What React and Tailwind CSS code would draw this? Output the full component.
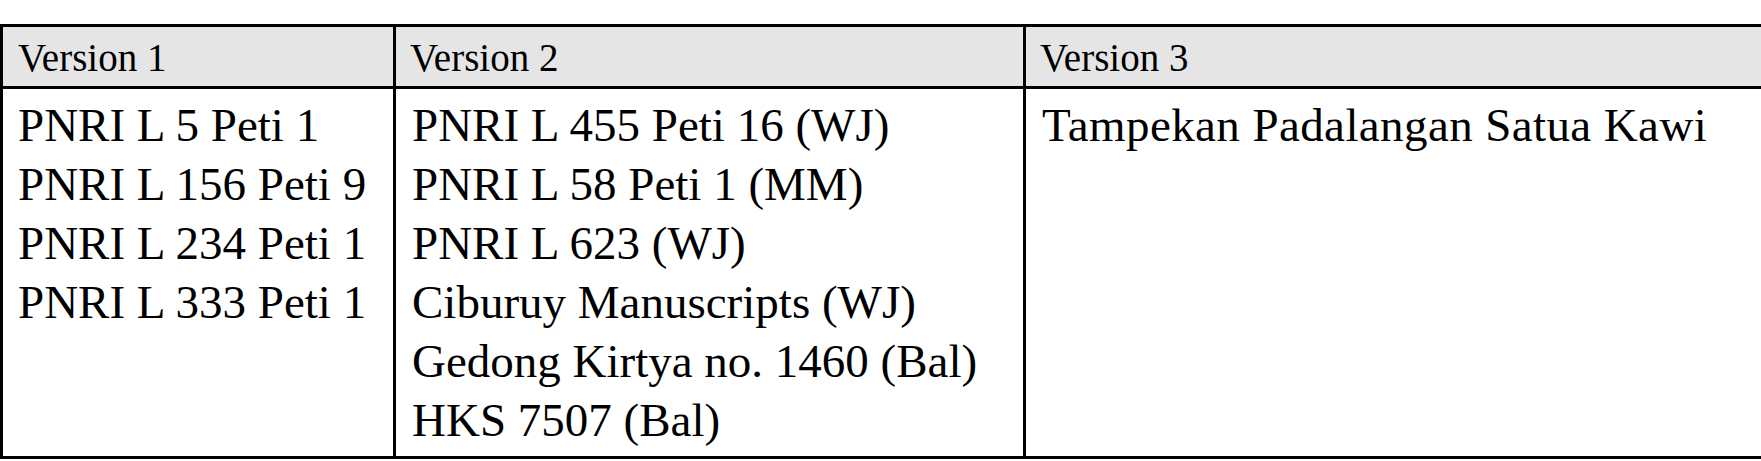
import React from "react";

const versions = [
  {
    title: "Version 1",
    items: ["PNRI L 5 Peti 1", "PNRI L 156 Peti 9", "PNRI L 234 Peti 1", "PNRI L 333 Peti 1"],
  },
  {
    title: "Version 2",
    items: [
      "PNRI L 455 Peti 16 (WJ)",
      "PNRI L 58 Peti 1 (MM)",
      "PNRI L 623 (WJ)",
      "Ciburuy Manuscripts (WJ)",
      "Gedong Kirtya no. 1460 (Bal)",
      "HKS 7507 (Bal)",
    ],
  },
  {
    title: "Version 3",
    items: ["Tampekan Padalangan Satua Kawi"],
  },
];

const App = () => {
  return (
    <div className="w-full overflow-hidden bg-white pt-[24px] text-black font-['Liberation_Serif',_'Times_New_Roman',_serif]">
      <div className="w-[1800px] border-t-[3px] border-l-[3px] border-b-[3px] border-black">
        {/* header */}
        <div className="grid grid-cols-[390px_630px_1fr] bg-[#e5e5e5] border-b-[3px] border-black">
          {versions.map((v, i) => (
            <div
              key={v.title}
              className={
                i === 0
                  ? "h-[59px] pl-[15px] pt-[2px] text-[39px] leading-[57px]"
                  : "h-[59px] pl-[14px] pt-[2px] text-[39px] leading-[57px] border-l-[3px] border-black"
              }
            >
              {v.title}
            </div>
          ))}
        </div>

        {/* body */}
        <div className="grid grid-cols-[390px_630px_1fr]">
          {versions.map((v, i) => (
            <div
              key={v.title}
              className={
                i === 0
                  ? "pl-[15px] pt-[7px] pb-[6px] text-[47px] leading-[59px]"
                  : i === 1
                  ? "pl-[16px] pt-[7px] pb-[6px] text-[47px] leading-[59px] border-l-[3px] border-black"
                  : "pl-[16px] pt-[7px] pb-[6px] text-[47px] leading-[59px] tracking-[0.4px] border-l-[3px] border-black"
              }
            >
              {v.items.map((item) => (
                <div key={item} className="whitespace-nowrap">
                  {item}
                </div>
              ))}
            </div>
          ))}
        </div>
      </div>
    </div>
  );
};

export default App;
